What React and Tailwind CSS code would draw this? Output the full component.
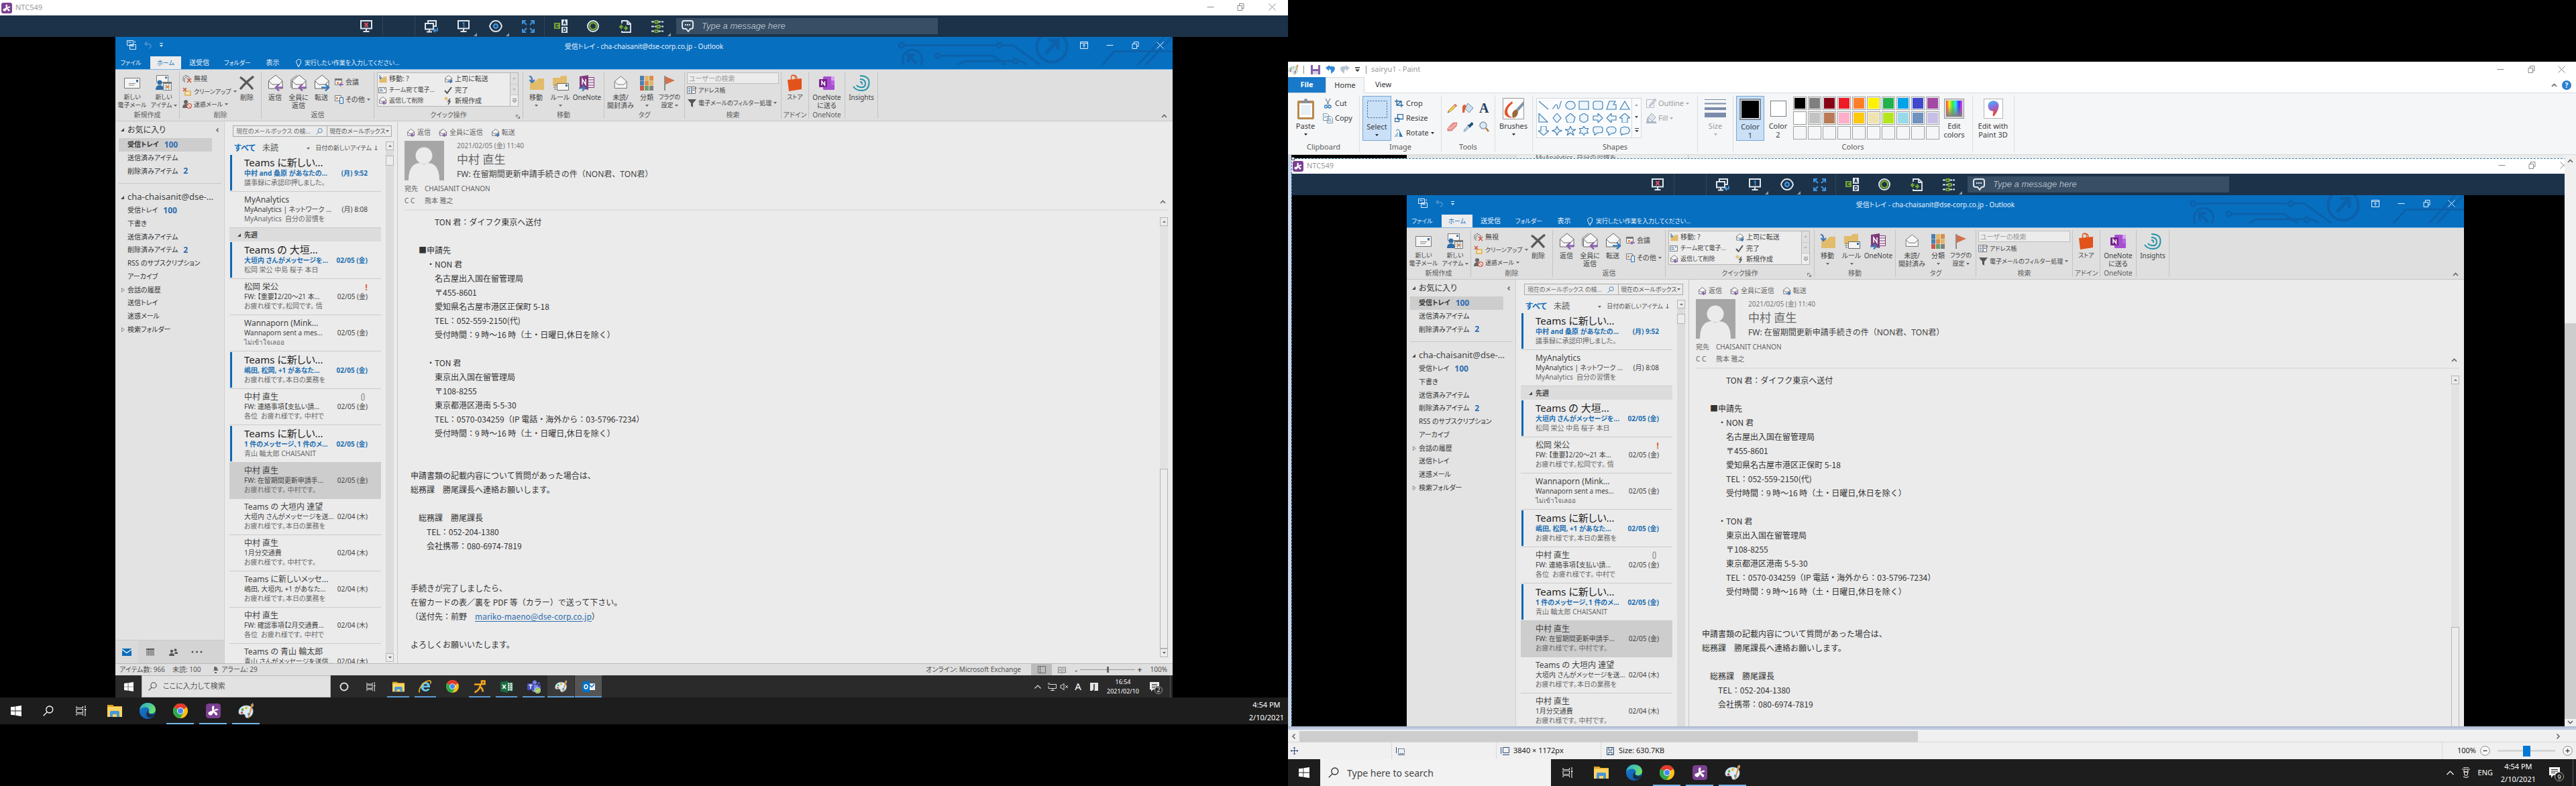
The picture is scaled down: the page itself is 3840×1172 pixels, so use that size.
import React from "react";

const cx = (...names) => names.filter(Boolean).join(" ");

function Svg({ w = 16, h = 16, box, className = "", children }) {
  return (
    <svg width={w} height={h} viewBox={box || `0 0 ${w} ${h}`} fill="none" aria-hidden="true" className={cx("shrink-0", className)}>
      {children}
    </svg>
  );
}

/* ---------- shared glyphs ---------- */

const Caret = ({ className = "text-[#666]" }) => (
  <Svg w={5} h={3} className={className}><path d="M0 0h5L2.500 3z" fill="currentColor" /></Svg>
);
const CaretUp = ({ className = "text-[#777]" }) => (
  <Svg w={5} h={3} className={className}><path d="M0 3h5L2.500 0z" fill="currentColor" /></Svg>
);
const Chevron = ({ className = "text-[#666]" }) => (
  <Svg w={9} h={6} className={className}><path d="M1 5l3.500-3.500L8 5" stroke="currentColor" strokeWidth="1.600" /></Svg>
);
const MinIcon = () => <Svg w={11} h={11}><path d="M.5 5.500h10" stroke="currentColor" /></Svg>;
const RestoreIcon = () => (
  <Svg w={11} h={11}><path d="M1 3.500h6.500V10.500H1zM3.500 3.500V.5H10v7H7.500" stroke="currentColor" /></Svg>
);
const CloseIcon = () => <Svg w={11} h={11}><path d="M.5.5l10 10M10.500.5l-10 10" stroke="currentColor" /></Svg>;

const Splash = ({ size = 16 }) => (
  <Svg w={size} h={size} box="0 0 16 16">
    <rect width="16" height="16" rx="3" fill="#7b3f90" />
    <path d="M7.500 2.500c1.500-.5 2 2 .9 4.800 1.600-1.700 4.400-2.300 4.900-1.100.4 1-2.300 1.600-4 1.700-.1.200 0 .5.200.7 2 .8 4 2.700 2.600 4-1.200 1-2.800-1-3.500-3-1 .5-1.500 3-3.500 3.200-1.500 0-2.900-1.300-2.600-2.600.4-1.900 3.300-1.400 4.400-3C6.400 6.300 6.100 3.200 7.500 2.500z" fill="#fff" />
  </Svg>
);
const WinLogo = ({ size = 16 }) => (
  <Svg w={size} h={size} box="0 0 16 16">
    <path d="M0 2.300L6.500 1.400v6.200H0zM7.300 1.300L16 0v7.600H7.300zM0 8.400h6.500v6.200L0 13.700zM7.300 8.400H16V16l-8.700-1.300z" fill="#fff" />
  </Svg>
);
const Glass = ({ size = 16, className = "text-white" }) => (
  <Svg w={size} h={size} box="0 0 16 16" className={className}>
    <circle cx="9.800" cy="6" r="5" stroke="currentColor" strokeWidth="1.300" />
    <path d="M6.300 9.600L.8 15.200" stroke="currentColor" strokeWidth="1.300" />
  </Svg>
);
const TaskView = ({ size = 16 }) => (
  <Svg w={size} h={size} box="0 0 16 16">
    <path d="M1 1v2.500h9.500V1M1 15v-2.500h9.500V15M1 5.500h9.500v5H1zM14 0v4M14 8v8" stroke="#ddd" strokeWidth="1.200" />
    <rect x="13" y="5" width="2.200" height="2.400" fill="#fff" />
  </Svg>
);
const Folder = ({ size = 22 }) => (
  <Svg w={size} h={size} box="0 0 22 22">
    <path d="M0 2h8l2 2h12v4H0z" fill="#e0a320" />
    <path d="M0 5h22v15H0z" fill="#fcd462" />
    <path d="M4 20v-7q0-2 2-2h10q2 0 2 2v7h-4v-4H8v4z" fill="#4a97d3" />
  </Svg>
);
const Edge = ({ size = 24 }) => (
  <Svg w={size} h={size} box="0 0 24 24">
    <defs>
      <linearGradient id="edgeTop" x1="0" y1="0" x2="1" y2=".6"><stop stopColor="#2aa7dc" /><stop offset="1" stopColor="#6be06a" /></linearGradient>
      <linearGradient id="edgeLow" x1="0" y1="0" x2="1" y2="1"><stop stopColor="#1b7fd4" /><stop offset="1" stopColor="#0d4f9f" /></linearGradient>
    </defs>
    <circle cx="12" cy="12" r="12" fill="url(#edgeLow)" />
    <path d="M0 11C.6 4.500 6 0 12 0c7 0 12 4.800 12 10 0 3.600-2.800 6-6.300 6-3 0-4.200-1.200-4.200-2 0-.6 1-1.200 1-3 0-2.500-2.700-4.500-6-4.500C4.500 6.500 1 8.500 0 11z" fill="url(#edgeTop)" />
    <path d="M13 13c.2 2.500 2.500 4.500 6 4.500 2 0 3.500-.7 4-1-.5 2-5 6-8.500 5.500C9.500 21 9 15 13 11z" fill="#1d1d1d" opacity=".75" />
  </Svg>
);
const Chrome = ({ size = 22 }) => (
  <Svg w={size} h={size} box="0 0 22 22">
    <circle cx="11" cy="11" r="11" fill="#fbc116" />
    <path d="M11 11L1.500 5.500A11 11 0 0 1 20.500 5.500z" fill="#e33b2e" />
    <path d="M11 11L1.500 5.500A11 11 0 0 0 10.500 22l5-8.500z" fill="#2da94f" />
    <path d="M1.500 5.500A11 11 0 0 1 20.500 6H11z" fill="#e33b2e" />
    <circle cx="11" cy="11" r="5" fill="#fff" /><circle cx="11" cy="11" r="4" fill="#4587f3" />
  </Svg>
);
const Palette = ({ size = 24 }) => (
  <Svg w={size} h={size} box="0 0 24 24">
    <path d="M1 15C0 9 5 4 12 4s11 4 10 10c-1 7-8 9-10 8-2-1-.5-4-3-5-3-1-7 2-8-2z" fill="#d9ecf8" stroke="#8fb9d6" strokeWidth=".7" />
    <circle cx="6.500" cy="10" r="2" fill="#5fae4b" /><circle cx="12" cy="7.500" r="2" fill="#edb52f" />
    <circle cx="5.500" cy="14.500" r="1.700" fill="#c8453c" /><circle cx="16" cy="17" r="2" fill="#3f83cc" />
    <path d="M20 3l2 1-6.500 19-1.500 0z" fill="#e08a2c" /><path d="M19 4.500C18 2 21 2 21 0c2 1 3 4 1 6z" fill="#c79b62" />
  </Svg>
);
const InternetExplorer = () => (
  <Svg w={20} h={20}>
    <path d="M16.500 13c-1 2.500-3.400 4-6 4-4 0-7-3-7-7s3-7 7-7 7 3 6.500 8H7.500c.3 4 4.500 4 5.500 2zM7.500 8.500h5.500c-.2-3.500-5.200-3.500-5.500 0z" fill="#66c6f1" />
    <path d="M1.500 18.500C-1 15 6 3 14 1.200c4-1 5 1 3.500 4.300" stroke="#f2bd2b" strokeWidth="1.600" />
  </Svg>
);
const Runner = () => (
  <Svg w={20} h={20}><path d="M2 6.500h11M13 1.500h4.500v4.500H13zM11.500 5.500C11 12 8 16 2.500 18.500M10.500 10c2 1 4 3.500 4.500 7.500" stroke="#f6a81c" strokeWidth="2.600" /></Svg>
);
const ExcelIcon = () => (
  <Svg w={19} h={18}>
    <path d="M9 3h9v12H9z" fill="#fff" stroke="#207346" /><path d="M10 6h7M10 9h7M10 12h7M14 3v12" stroke="#207346" />
    <path d="M0 2l11-2v18L0 16z" fill="#1d6b41" /><path d="M3 6l5 6M8 6l-5 6" stroke="#fff" strokeWidth="1.600" />
  </Svg>
);
const TeamsIcon = () => (
  <Svg w={20} h={20}>
    <circle cx="11" cy="3.500" r="3" fill="#7b83eb" /><circle cx="17" cy="5" r="2" fill="#5059c9" />
    <path d="M7 7h9v7q-1 4-5 4t-4-4z" fill="#7b83eb" /><path d="M15 8h5v5q-1 3-4 2z" fill="#5059c9" />
    <rect y="5" width="10" height="10" rx="1" fill="#4b53bc" /><path d="M2.500 7.500h5M5 7.500v5.500" stroke="#fff" strokeWidth="1.400" />
    <circle cx="15.500" cy="15.500" r="4.300" fill="#92c353" stroke="#fff" strokeWidth=".6" /><path d="M13.500 15.500l1.500 1.500 2.500-3" stroke="#fff" />
  </Svg>
);
const OutlookIcon = () => (
  <Svg w={19} h={18}>
    <path d="M9 4h10v10H9z" fill="#e9f2fb" /><path d="M10 6l4 3.500L18 5" stroke="#0f6cbd" strokeWidth="1.400" />
    <path d="M0 2l11-2v18L0 16z" fill="#0072c6" /><ellipse cx="5.500" cy="9" rx="2.300" ry="3" stroke="#fff" strokeWidth="1.600" />
  </Svg>
);

/* ---------- remote toolbar ---------- */

const MonitorIcon = ({ kind }) => (
  <Svg w={18} h={18}>
    <path d="M1 1h16v11.500H1zM9 13v3M4.500 17h9" stroke="#dfe6ec" strokeWidth="2" />
    {kind === "x" && <path d="M6.500 4l5 6M11.500 4l-5 6" stroke="#e0505c" strokeWidth="2" />}
    {kind === "1" && <path d="M7.500 5l2-1v6.500" stroke="#3f93dc" strokeWidth="1.600" />}
  </Svg>
);
const MonitorsIcon = () => (
  <Svg w={20} h={19}>
    <path d="M5 5V1h12v8h-3M1 5h12v8.500H1zM7 14v3M3 17.500h8" stroke="#dfe6ec" strokeWidth="2" />
    <path d="M19 11v4.500h-5M16 13l-2.500 2.500L16 18" stroke="#3f93dc" strokeWidth="1.800" />
  </Svg>
);
const EyeIcon = () => (
  <Svg w={20} h={18}><path d="M1 9q2.500-8 9-8t9 8q-2.500 8-9 8T1 9z" stroke="#dfe6ec" strokeWidth="2" /><circle cx="10" cy="9" r="3" stroke="#3f93dc" strokeWidth="2.400" /></Svg>
);
const ExpandIcon = () => (
  <Svg w={19} h={19}><path d="M6 1H1v5M1 1l6 6M13 1h5v5M18 1l-6 6M6 18H1v-5M1 18l6-6M13 18h5v-5M18 18l-6-6" stroke="#3f93dc" strokeWidth="2" /></Svg>
);
const CadIcon = () => (
  <Svg w={21} h={20}>
    <rect y="5" width="9" height="9" fill="#76a832" /><rect x="11" width="9" height="9" fill="#dfe6ec" /><rect x="11" y="11" width="9" height="9" fill="#dfe6ec" />
    <path d="M6.500 7.500h-3.500v4h3.500M13.500 7.500L15.500 2l2 5.500M14 5.500h3M14 13h1.500q2 0 2 2.500t-2 2.500H14z" stroke="#1c3249" strokeWidth="1.300" />
  </Svg>
);
const RingIcon = () => (
  <Svg w={18} h={18}><circle cx="9" cy="9" r="8" stroke="#dfe6ec" strokeWidth="2" /><circle cx="9" cy="9" r="5" stroke="#76a832" strokeWidth="2.400" /></Svg>
);
const FileIcon = () => (
  <Svg w={18} h={19}><path d="M4 5V1h8l5 4.500V18H4v-2M12 1v5h5" stroke="#dfe6ec" strokeWidth="1.800" /><path d="M4 7L1 10l3 3M1 10h5M9 9l3 3-3 3M12 12H7" stroke="#76a832" strokeWidth="2" /></Svg>
);
const SlidersIcon = () => (
  <Svg w={19} h={19}>
    <path d="M0 2.500h18M0 9.500h18M0 16.500h18" stroke="#dfe6ec" strokeWidth="2" strokeDasharray="4 1" />
    <path d="M5.500 1h4v3.500h-4zM8.500 8h4v3.500h-4zM5.500 14.800h4v3.500h-4z" fill="#1c3249" stroke="#76a832" strokeWidth="1.800" />
  </Svg>
);
const ChatIcon = () => (
  <Svg w={18} h={18}><path d="M4 1h10q3 0 3 3v6q0 3-3 3h-1l-3 4-3-4H4q-3 0-3-3V4q0-3 3-3z" stroke="#dfe6ec" strokeWidth="2" /><path d="M5 7h2M8 7h2M11 7h2" stroke="#dfe6ec" strokeWidth="2" /></Svg>
);

function ToolButton({ label, menu, children }) {
  return (
    <button aria-label={label} className="relative flex h-8 w-12 items-center justify-center">
      {children}
      {menu && <span className="absolute right-1 bottom-[1px]"><Svg w={5} h={5}><path d="M5 0v5H0z" fill="#8f9dab" /></Svg></span>}
    </button>
  );
}

function RemoteToolbar({ id }) {
  return (
    <div className="flex h-8 shrink-0 items-center justify-center bg-[#1c3249]">
      <ToolButton label="Disconnect"><MonitorIcon kind="x" /></ToolButton>
      <span className="h-8 w-[49px] border-x border-[#31465c]" />
      <ToolButton label="Switch monitor"><MonitorsIcon /></ToolButton>
      <ToolButton label="Monitor 1" menu><MonitorIcon kind="1" /></ToolButton>
      <ToolButton label="View options" menu><EyeIcon /></ToolButton>
      <ToolButton label="Full screen"><ExpandIcon /></ToolButton>
      <span className="h-8 w-px bg-[#31465c]" />
      <ToolButton label="Ctrl Alt Del"><CadIcon /></ToolButton>
      <ToolButton label="Record"><RingIcon /></ToolButton>
      <ToolButton label="File transfer"><FileIcon /></ToolButton>
      <ToolButton label="Settings" menu><SlidersIcon /></ToolButton>
      <label htmlFor={`${id}-msg`} className="ml-1 flex h-6 w-[390px] items-center gap-3 bg-[#374e65] pl-2">
        <ChatIcon />
        <input id={`${id}-msg`} aria-label="Message" placeholder="Type a message here" className="w-full bg-transparent font-['Liberation_Sans',sans-serif] text-[13px] text-white italic outline-none placeholder:text-[#aab6c2]" />
      </label>
    </div>
  );
}

/* ---------- Outlook icons ---------- */

const Env = ({ arrow, all, w = 25, h = 25 }) => (
  <Svg w={w} h={h} box="0 0 25 25">
    {all && <path d="M.8 20V8l9-7" stroke="#777" />}
    <path d="M2.500 9.500L13 1l10 8.500V21h-20.500z" fill="#f6f6f6" stroke="#666" strokeWidth={w < 16 ? 1.800 : 1} />
    <path d="M2.500 9.500L8 15h10l5-5.500" stroke="#666" strokeWidth={w < 16 ? 1.800 : 1} />
    {arrow === "left" && <path d="M24 19.500H14M18 14.500l-5 5 5 5" stroke="#8b5fb0" strokeWidth={w < 16 ? 3.600 : 2.400} />}
    {arrow === "right" && <path d="M12 19.500h10M18 14.500l5 5-5 5" stroke="#3a78b8" strokeWidth={w < 16 ? 3.600 : 2.400} />}
  </Svg>
);
const MailNew = () => (
  <Svg w={24} h={16}><path d="M.5.5h23v15H.5z" fill="#f5f5f5" stroke="#777" /><path d="M18 3h3v3.500h-3z" fill="#2e6da8" /><path d="M7 8.500h10M7 11h8" stroke="#888" /></Svg>
);
const ItemsNew = () => (
  <Svg w={24} h={24}>
    <path d="M1.500.5h17v10h-17z" fill="#f5f5f5" stroke="#777" /><path d="M14 2.500h3V5h-3z" fill="#2e6da8" />
    <circle cx="6" cy="11" r="3.500" fill="#2e6da8" /><path d="M0 22q0-7 6-7t6 7z" fill="#2e6da8" />
    <path d="M11.500 10.500h12v12h-12z" fill="#f5f5f5" stroke="#777" /><path d="M11 10h13v3H11z" fill="#777" /><path d="M15.500 13v9M19.500 13v9M12 16h12M12 19h12" stroke="#aaa" /><path d="M16 16h4v3h-4z" fill="#e88a43" />
  </Svg>
);
const BigX = () => <Svg w={24} h={22}><path d="M2 2q11 8 19 18M22 1Q12 8 2 20" stroke="#5a5a5a" strokeWidth="3.400" /></Svg>;
const FolderMove = ({ w = 25, h = 22 }) => (
  <Svg w={w} h={h} box="0 0 25 22"><path d="M3 8h9l3-4h9v17H3z" fill="#e2bb6b" /><path d="M2 0q5 2 4 9M2.500 6L6 10l4-4" stroke="#3f79b5" strokeWidth="2.200" /></Svg>
);
const RuleIcon = () => (
  <Svg w={25} h={24}><path d="M1 4h10l3-3h8v15H1z" fill="#e2bb6b" /><path d="M7.500 12.500h17v10h-17z" fill="#f5f5f5" stroke="#666" /><path d="M20 14h3v3h-3z" fill="#2e6da8" /><path d="M3 15h3M2 18h4M3 21h3" stroke="#666" /></Svg>
);
const OneNoteOld = () => (
  <Svg w={24} h={24}><path d="M13 3.500h9.500v15H13z" fill="#eee" stroke="#80397b" /><path d="M14 7h8M14 11h8M14 15h8" stroke="#80397b" /><path d="M1 2l13-2v22L1 19z" fill="#80397b" /><path d="M5 14V6l5 8V6" stroke="#fff" strokeWidth="1.500" /><path d="M0 19.500h8M5 15.500l4 4-4 4" stroke="#3f79b5" strokeWidth="2.200" /></Svg>
);
const OneNoteNew = () => (
  <Svg w={24} h={20}><rect x="6" width="17" height="20" rx="1.500" fill="#a74fd0" /><path d="M18 0h5v6h-5z" fill="#d9a2f0" /><path d="M18 6h5v7h-5z" fill="#ba66df" /><rect y="4" width="12" height="12" rx="1" fill="#75218b" /><path d="M4 13V7l4.500 6V7" stroke="#fff" strokeWidth="1.500" /></Svg>
);
const CategoryIcon = () => (
  <Svg w={20} h={22}>
    <path d="M0 0h6v7H0zM0 7.500h6v7H0z" fill="#4b7eb0" /><path d="M7 0h6v7H7zM14 7.500h6v7h-6z" fill="#e0b767" /><path d="M14 0h6v7h-6zM7 7.500h6v7H7z" fill="#da8c4c" /><path d="M0 15h6v7H0z" fill="#c75a4c" /><path d="M7 15h6v7H7z" fill="#6aa06a" /><path d="M14 15h6v7h-6z" fill="#808080" />
  </Svg>
);
const FlagIcon = () => <Svg w={18} h={22}><path d="M2 0v22" stroke="#777" strokeWidth="1.600" /><path d="M3 1l14 6-14 6z" fill="#d3714c" /></Svg>;
const StoreIcon = () => <Svg w={22} h={25}><path d="M5.500 8V4q0-3 3-3t3 3v4M8 2q6-2 6 5" stroke="#dd5a25" strokeWidth="1.400" /><path d="M0 8l21-2v16l-19 3z" fill="#e2521b" /></Svg>;
const InsightsIcon = () => <Svg w={26} h={24}><path d="M11 1q14 0 13.500 11T13 23Q5 23 1 17M11 6q8 0 8 6.500T12 18q-4 0-6-3M11 10q4 0 3 4" stroke="#2493a8" strokeWidth="2" /></Svg>;

const SmallEnv = ({ arrow = "left", all }) => <Env arrow={arrow} all={all} w={13} h={12} />;
const IgnoreIcon = () => <Svg w={14} h={13}><path d="M1 10V4l4-3 5 3v6M3 12V6l4-3" stroke="#777" /><path d="M7 6l6 6M13 6l-6 6" stroke="#d0573f" strokeWidth="1.600" /></Svg>;
const CleanIcon = () => <Svg w={14} h={13}><path d="M3 5h10v8H3z" fill="#e2bb6b" /><path d="M5 7h6v4H5z" fill="#f3e2bd" /><path d="M1 1l5 5M6 1L1 6" stroke="#d0573f" strokeWidth="1.600" /></Svg>;
const JunkIcon = () => <Svg w={14} h={13}><circle cx="5" cy="3" r="3" fill="#666" /><path d="M0 12q0-6 5-6t4 6z" fill="#666" /><circle cx="10" cy="9" r="3.400" fill="#eee" stroke="#d0573f" strokeWidth="1.300" /><path d="M8 7l4 4" stroke="#d0573f" /></Svg>;
const MeetIcon = () => <Svg w={13} h={12}><path d="M.5.5h10v9H.5z" fill="#f2f2f2" stroke="#777" /><path d="M0 0h11v3H0z" fill="#777" /><path d="M3 5h3v3H3z" fill="#e88a43" /><path d="M13 9H7M9.500 6.500L7 9l2.500 2.500" stroke="#8b5fb0" strokeWidth="1.400" /></Svg>;
const MoreIcon = () => <Svg w={13} h={13}><path d="M.5.5h9v8h-9z" fill="#f2f2f2" stroke="#777" /><path d="M2 3h3v3H2z" fill="#e88a43" /><path d="M7.500 3.500h5v9h-5z" fill="#dcebf7" stroke="#2e6da8" /></Svg>;
const CardIcon = () => <Svg w={12} h={9}><path d="M.5.5h11v8H.5z" fill="#f2f2f2" stroke="#777" /><path d="M2 3h4M2 5.500h5M8 2.500h2" stroke="#2e6da8" /></Svg>;
const CheckIcon = () => <Svg w={12} h={11}><path d="M1 6l3.500 4L11 1" stroke="#555" strokeWidth="2" /></Svg>;
const BoltIcon = () => <Svg w={12} h={12}><path d="M9 3L6 7h3l-3 5" stroke="#555" strokeWidth="1.600" /><path d="M3 0v6M0 3h6M1 1l4 4M5 1L1 5" stroke="#e5b667" /></Svg>;
const BookIcon = () => <Svg w={14} h={11}><path d="M.5.5H7v10H.5zM7 .5h5.500v10H7z" fill="#f2f2f2" stroke="#777" /><path d="M2 3h3M2 5.500h3M2 8h3M8.500 3h3M8.500 5.500h3" stroke="#2e6da8" /><path d="M13.500 1v3" stroke="#d0573f" /></Svg>;
const FunnelIcon = () => <Svg w={13} h={12}><path d="M0 0h13L8 6v6l-3-2V6z" fill="#555" /></Svg>;

/* ---------- Outlook ribbon ---------- */

function Big({ icon, lines, w, caret, text }) {
  return (
    <button className={cx("flex shrink-0 flex-col items-center", w, text)}>
      <span className="flex h-[31px] items-center justify-center">{icon}</span>
      {lines.map((line, i) => (
        <span key={line} className="flex h-3 items-center gap-[2px] leading-3 whitespace-nowrap">
          {line}
          {caret === "inline" && i === lines.length - 1 && <Caret />}
        </span>
      ))}
      {caret === "below" && <span className="flex h-3 items-center"><Caret /></span>}
    </button>
  );
}
const Small = ({ icon, children, caret, h = "h-[19px]", text }) => (
  <button className={cx("flex items-center gap-[3px] whitespace-nowrap", h, text)}>
    <span className="flex w-[14px] justify-center">{icon}</span>
    {children}
    {caret && <Caret />}
  </button>
);
function Group({ w, label, children, launcher }) {
  return (
    <section className={cx("flex shrink-0 flex-col", w)}>
      <div className="flex h-full border-r border-[#c3c3c3]">
        <div className="flex min-w-0 flex-1 flex-col">
          <div className="flex flex-1 pt-[1px]">{children}</div>
          <div className="relative h-[12px] text-center leading-[12px] text-[#5f5f5f]">
            {label}
            {launcher && <span className="absolute right-1 bottom-0"><Svg w={6} h={6}><path d="M.5 4V.5H4M2 2l3 3M5.500 2.500v3h-3" stroke="#777" /></Svg></span>}
          </div>
        </div>
      </div>
    </section>
  );
}

function Ribbon({ id }) {
  return (
    <div className="flex h-[77px] shrink-0 border-b border-[#c6c6c6] bg-[#dfdfdf] py-[3px] text-[10px] text-[#444]">
      <Group w="w-[96px]" label="新規作成">
        <Big w="w-[50px]" text="text-[9px]" icon={<MailNew />} lines={["新しい", "電子メール"]} />
        <Big w="w-[44px]" text="text-[9px]" icon={<ItemsNew />} lines={["新しい", "アイテム"]} caret="inline" />
      </Group>
      <Group w="w-[122px]" label="削除">
        <div className="flex w-[80px] flex-col pl-[4px]">
          <Small icon={<IgnoreIcon />}>無視</Small>
          <Small text="text-[9px]" icon={<CleanIcon />} caret>クリーンアップ</Small>
          <Small text="text-[9px]" icon={<JunkIcon />} caret>迷惑メール</Small>
        </div>
        <Big w="w-[40px]" icon={<BigX />} lines={["削除"]} />
      </Group>
      <Group w="w-[168px]" label="返信">
        <Big w="w-[40px]" icon={<Env arrow="left" />} lines={["返信"]} />
        <Big w="w-[30px]" icon={<Env arrow="left" all />} lines={["全員に", "返信"]} />
        <Big w="w-[38px]" icon={<Env arrow="right" />} lines={["転送"]} />
        <div className="flex flex-col">
          <Small h="h-[29px]" icon={<MeetIcon />}>会議</Small>
          <Small h="h-[23px]" icon={<MoreIcon />} caret>その他</Small>
        </div>
      </Group>
      <Group w="w-[222px]" label="クイック操作" launcher>
        <div className="mx-1 flex h-[51px] w-[211px] border border-[#b5b5b5] bg-[#ececec]">
          <div className="w-[98px]">
            <Small h="h-[17px]" icon={<FolderMove w={13} h={12} />}>移動: ?</Small>
            <Small h="h-[16px]" text="text-[9px]" icon={<CardIcon />}>チーム宛て電子…</Small>
            <Small h="h-[16px]" text="text-[9px]" icon={<SmallEnv />}>返信して削除</Small>
          </div>
          <div className="flex-1">
            <Small h="h-[17px]" icon={<SmallEnv arrow="right" />}>上司に転送</Small>
            <Small h="h-[16px]" icon={<CheckIcon />}>完了</Small>
            <Small h="h-[16px]" icon={<BoltIcon />}>新規作成</Small>
          </div>
          <div className="flex w-[12px] flex-col border-l border-[#b5b5b5] bg-[#dfdfdf]">
            <button aria-label="上へ" className="flex flex-1 items-center justify-center border-b border-[#c8c8c8]"><CaretUp className="text-[#b5b5b5]" /></button>
            <button aria-label="下へ" className="flex flex-1 items-center justify-center border-b border-[#c8c8c8]"><Caret className="text-[#b5b5b5]" /></button>
            <button aria-label="その他" className="flex flex-1 items-center justify-center bg-[#eee]"><Svg w={6} h={6}><path d="M0 .5h6M0 3h6L3 6z" stroke="#666" strokeWidth=".8" /></Svg></button>
          </div>
        </div>
      </Group>
      <Group w="w-[121px]" label="移動">
        <Big w="w-[38px]" icon={<FolderMove />} lines={["移動"]} caret="below" />
        <Big w="w-[34px]" icon={<RuleIcon />} lines={["ルール"]} caret="below" />
        <Big w="w-[46px]" icon={<OneNoteOld />} lines={["OneNote"]} />
      </Group>
      <Group w="w-[120px]" label="タグ">
        <Big w="w-[48px]" icon={<Env w={22} h={22} />} lines={["未読/", "開封済み"]} />
        <Big w="w-[30px]" icon={<CategoryIcon />} lines={["分類"]} caret="below" />
        <Big w="w-[38px]" text="text-[9px]" icon={<FlagIcon />} lines={["フラグの", "設定"]} caret="inline" />
      </Group>
      <Group w="w-[144px]" label="検索">
        <div className="flex flex-col pl-[3px]">
          <input id={`${id}-people`} aria-label="ユーザーの検索" placeholder="ユーザーの検索" className="h-[17px] w-[137px] border border-[#bdbdbd] bg-[#ececec] px-[2px] outline-none placeholder:text-[#9a9a9a]" />
          <Small text="text-[9px]" icon={<BookIcon />}>アドレス帳</Small>
          <Small text="text-[9px]" icon={<FunnelIcon />} caret>電子メールのフィルター処理</Small>
        </div>
      </Group>
      <Group w="w-[41px]" label="アドイン"><Big w="w-[40px]" icon={<StoreIcon />} lines={["ストア"]} text="text-[9px]" /></Group>
      <Group w="w-[54px]" label="OneNote"><Big w="w-[53px]" icon={<OneNoteNew />} lines={["OneNote", "に送る"]} /></Group>
      <Group w="w-[49px]" label=""><Big w="w-[48px]" icon={<InsightsIcon />} lines={["Insights"]} /></Group>
      <button aria-label="リボンを折りたたむ" className="mr-2 mb-[1px] ml-auto self-end"><Chevron /></button>
    </div>
  );
}

function OutlookHeader() {
  return (
    <div className="relative h-[49px] shrink-0 overflow-hidden border-b border-[#7fb6e3] bg-[#076fc0] text-[10px] text-[#e6f0f9]">
      <span className="absolute top-0 right-0">
        <Svg w={412} h={42}>
          <g stroke="#0c61aa" strokeWidth="3">
            <circle cx="8" cy="12.500" r="3.500" /><path d="M12 12.500h138M158 12.500h16L215 42" /><circle cx="154" cy="12.500" r="3.500" />
            <circle cx="61.500" cy="28" r="3.500" /><path d="M65 28h79l20 14" />
            <path d="M92 42q8-6 14-6h68M181 36q8 0 14 6" /><circle cx="177.500" cy="36.500" r="3.500" />
            <circle cx="24" cy="34" r="14.500" /><path d="M30 40L20 29M18 38V27h10" strokeWidth="4" />
            <circle cx="232" cy="15" r="22.500" strokeWidth="4" /><path d="M223 25l16-18M227 5h14v14" strokeWidth="5" />
            <path d="M307 42l18-20.500h87M360 42L399 0M372 42L411 0" />
          </g>
        </Svg>
      </span>
      <div className="relative flex h-[29px] items-center">
        <div className="flex w-[151px] items-center gap-3 pb-[5px] pl-[17px]">
          <button aria-label="すべて送受信"><Svg w={14} h={14}><path d="M.5.5h9v7h-9zM4.500 6.500h9v7h-9zM2 3h5M12 1v3M6 9h5" stroke="currentColor" /></Svg></button>
          <button aria-label="元に戻す" className="text-[#4e93cf]"><Svg w={11} h={11}><path d="M4 0L1 3.500 4.500 6M1 3.500h5q4 0 4 3T7 10" stroke="currentColor" strokeWidth="1.400" /></Svg></button>
          <button aria-label="カスタマイズ"><Svg w={5} h={6}><path d="M0 0h5v1H0zM0 3h5L2.500 6z" fill="currentColor" /></Svg></button>
        </div>
        <h1 className="flex-1 text-center">受信トレイ - cha-chaisanit@dse-corp.co.jp - Outlook</h1>
        <div className="flex pb-[5px]">
          <button aria-label="リボンの表示オプション" className="flex w-[38px] justify-center"><Svg w={12} h={11}><path d="M.5.5h11v10H.5zM.5 2.500h11M6 9V4M4 6l2-2 2 2" stroke="currentColor" /></Svg></button>
          <button aria-label="最小化" className="flex w-[38px] justify-center"><MinIcon /></button>
          <button aria-label="元のサイズに戻す" className="flex w-[38px] justify-center"><RestoreIcon /></button>
          <button aria-label="閉じる" className="flex w-[37px] justify-center"><CloseIcon /></button>
        </div>
      </div>
      <nav className="relative flex h-[19px]">
        <button className="w-[52px] pr-[6px] text-[9px]">ファイル</button>
        <button className="w-[46px] bg-[#ececec] text-[9px] text-[#076fc0]">ホーム</button>
        <button className="w-[54px]">送受信</button>
        <button className="w-[60px] text-[9px]">フォルダー</button>
        <button className="w-[45px]">表示</button>
        <button className="flex items-center gap-[5px] pl-3 text-[9px]">
          <Svg w={8} h={12}><path d="M2.500 8Q.5 6 .5 4t3.500-3.500T7.500 4t-2 4v2h-3zM3 11.500h2" stroke="currentColor" /></Svg>
          実行したい作業を入力してください...
        </button>
      </nav>
    </div>
  );
}

/* ---------- Outlook body ---------- */

const favourites = [["受信トレイ", "100", true], ["送信済みアイテム"], ["削除済みアイテム", "2"]];
const folders = [
  ["受信トレイ", "100"], ["下書き"], ["送信済みアイテム"], ["削除済みアイテム", "2"], ["RSS のサブスクリプション"],
  ["アーカイブ"], ["会話の履歴", null, false, true], ["送信トレイ"], ["迷惑メール"], ["検索フォルダー", null, false, true],
];
const Tri = () => <Svg w={5} h={5}><path d="M5 0v5H0z" fill="#444" /></Svg>;

function FolderRow({ item: [name, count, active, child] }) {
  return (
    <button className={cx("mr-[18px] ml-[5px] flex flex-1 items-center gap-2 text-left text-[10px]", active && "bg-[#cdcdcd] font-semibold")}>
      <span className="-mr-2 w-[13px] pl-[4px]">{child && <Svg w={5} h={7}><path d="M.5.5v6l4-3z" stroke="#777" strokeWidth=".8" /></Svg>}</span>
      <span className="text-[#333]">{name}</span>
      {count && <span className="text-[12px] leading-[14px] font-bold text-[#2b6cb0]">{count}</span>}
    </button>
  );
}

function FolderPane() {
  return (
    <aside className="flex w-[163px] shrink-0 flex-col border-r border-[#cfcfcf] bg-[#e3e3e3]">
      <div className="flex h-[25px] items-center justify-between pr-2 pl-[8px] text-[12px] text-[#333]">
        <button className="flex items-center gap-[5px]"><Tri />お気に入り</button>
        <button aria-label="折りたたむ"><Svg w={4} h={6}><path d="M3.500.5l-2.500 2.500 2.500 2.500" stroke="#555" strokeWidth="1.400" /></Svg></button>
      </div>
      <div className="flex h-[59px] flex-col">{favourites.map((f) => <FolderRow key={f[0]} item={f} />)}</div>
      <div className="mx-[5px] mt-2 mr-1 border-t border-[#c8c8c8]" />
      <button className="mt-[10px] flex h-5 items-center gap-[5px] pl-[8px] text-[13px] text-[#444]"><Tri />cha-chaisanit@dse-…</button>
      <div className="flex h-[197px] flex-col">{folders.map((f) => <FolderRow key={f[0]} item={f} />)}</div>
      <nav className="mt-auto flex h-[35px] items-center border-t border-[#cbcbcb] bg-[#d4d4d4] text-[#555]">
        <button aria-label="メール" className="flex h-full w-[34px] items-center justify-center bg-[#dadada]"><Svg w={14} h={11}><path d="M0 0h14v11H0z" fill="#0e6cbb" /><path d="M0 1.500l7 5 7-5" stroke="#fff" strokeWidth="1.200" /></Svg></button>
        <button aria-label="予定表" className="flex w-[35px] justify-center"><Svg w={12} h={11}><path d="M0 0h12v2H0z" fill="#555" /><path d="M0 4h12M0 6.500h12M0 9h12M1 2v9M3.500 2v9M6 2v9M8.500 2v9M11 2v9" stroke="#777" strokeWidth="1" /></Svg></button>
        <button aria-label="連絡先" className="flex w-[35px] justify-center"><Svg w={13} h={11}><circle cx="4" cy="4" r="2.200" fill="#555" /><path d="M0 11q0-4 4-4t4 4zM8 8q0-3 3-3t2 3z" fill="#555" /><circle cx="9.500" cy="2.200" r="2" fill="#555" /></Svg></button>
        <button aria-label="その他" className="flex w-[35px] justify-center"><Svg w={17} h={4}><circle cx="2" cy="2" r="1.500" fill="#555" /><circle cx="8.500" cy="2" r="1.500" fill="#555" /><circle cx="15" cy="2" r="1.500" fill="#555" /></Svg></button>
      </nav>
    </aside>
  );
}

const recent = [
  { from: "Teams に新しい...", subject: "中村 and 桑原 があなたの...", date: "(月) 9:52", text: "議事録に承認印押しました。", unread: true },
  { from: "MyAnalytics", subject: "MyAnalytics | ネットワーク ...", date: "(月) 8:08", text: "MyAnalytics  自分の習慣を" },
];
const lastWeek = [
  { from: "Teams の 大垣...", subject: "大垣内 さんがメッセージを...", date: "02/05 (金)", text: "松岡 栄公 中島 桜子 本日", unread: true },
  { from: "松岡 栄公", subject: "FW: 【重要】2/20～21 本...", date: "02/05 (金)", text: "お疲れ様です。松岡です。 情", mark: "!" },
  { from: "Wannaporn (Mink...", subject: "Wannaporn sent a mes...", date: "02/05 (金)", text: "ไม่เข้าใจเลออ" },
  { from: "Teams に新しい...", subject: "嶋田, 松岡, +1 があなた...", date: "02/05 (金)", text: "お疲れ様です。本日の業務を", unread: true },
  { from: "中村 直生", subject: "FW: 連絡事項【支払い請...", date: "02/05 (金)", text: "各位  お疲れ様です。 中村で", mark: "clip" },
  { from: "Teams に新しい...", subject: "1 件のメッセージ、1 件のメ...", date: "02/05 (金)", text: "青山 輪太郎 CHAISANIT", unread: true },
  { from: "中村 直生", subject: "FW: 在留期間更新申請手...", date: "02/05 (金)", text: "お疲れ様です。 中村です。", selected: true },
  { from: "Teams の 大垣内 達望", subject: "大垣内 さんがメッセージを送...", date: "02/04 (木)", text: "お疲れ様です。本日の業務を" },
  { from: "中村 直生", subject: "1月分交通費", date: "02/04 (木)", text: "お疲れ様です。 中村です。" },
  { from: "Teams に新しいメッセ...", subject: "嶋田, 大垣内, +1 があなた...", date: "02/04 (木)", text: "お疲れ様です。本日の業務を" },
  { from: "中村 直生", subject: "FW: 確認事項【2月交通費...", date: "02/04 (木)", text: "各位  お疲れ様です。 中村で" },
  { from: "Teams の 青山 輪太郎", subject: "青山 さんがメッセージを送信...", date: "02/04 (木)", text: "お疲れ様です。" },
];

function MailItem({ m }) {
  return (
    <button className={cx("flex shrink-0 border-b border-[#cbcbcb] pr-5 pl-[1px] text-left text-[10px] whitespace-pre", m.unread ? "h-[56px]" : "h-[54px]", m.selected && "bg-[#cdcdcd]")}>
      <span className={cx("mt-[1px] mr-[18px] h-[53px] w-[3px] shrink-0", m.unread && "bg-[#0f67b1]")} />
      <span className={cx("flex min-w-0 flex-1 flex-col", m.unread ? "pt-[4px]" : "pt-[5px]")}>
        <span className="flex items-center justify-between">
          <span className={cx(m.unread ? "h-[17px] text-[15px] leading-[17px] text-[#222]" : "h-[14px] text-[12px] leading-[14px] text-[#444]")}>{m.from}</span>
          {m.mark === "!" && <span className="text-[13px] leading-[14px] font-bold text-[#d9623b]">!</span>}
          {m.mark === "clip" && <Svg w={6} h={12} className="mr-1"><path d="M1 3v6q0 2 2 2t2-2V3Q5 .8 3.200.8T1.500 3" stroke="#777" /></Svg>}
        </span>
        <span className={cx("flex h-[14px] justify-between gap-1 leading-[14px]", m.unread ? "font-bold text-[#1f6fb2]" : "text-[#444]")}>
          <span>{m.subject}</span>
          <span>{m.date}</span>
        </span>
        <span className="h-[14px] leading-[14px] text-[#6a6a6a]">{m.text}</span>
      </span>
    </button>
  );
}

const ScrollBtn = ({ label, down }) => (
  <button aria-label={label} className="flex h-[13px] shrink-0 items-center justify-center border border-[#b5b5b5] bg-[#ececec]">{down ? <Caret /> : <CaretUp />}</button>
);

function MailList({ id }) {
  return (
    <section className="flex w-[258px] shrink-0 flex-col border-r border-[#c6c6c6] bg-[#ebebeb] text-[10px] text-[#555]">
      <div className="mt-[6px] ml-3 flex h-[17px] w-[237px] shrink-0 border border-[#a9a9a9] text-[9px]">
        <label className="flex w-[140px] items-center border-r border-[#a9a9a9] pr-[6px] pl-1" htmlFor={`${id}-search`}>
          <input id={`${id}-search`} aria-label="検索" placeholder="現在のメールボックス の検…" className="h-full min-w-0 flex-1 bg-transparent outline-none placeholder:text-[#6a6a6a]" />
          <Glass size={10} className="text-[#2e6da8]" />
        </label>
        <button className="flex flex-1 items-center justify-between pr-1 pl-[3px] whitespace-nowrap">現在のメールボックス<Caret /></button>
      </div>
      <div className="mt-1 flex min-h-0 flex-1">
        <div className="ml-[7px] flex w-[226px] flex-col overflow-hidden">
          <div className="flex h-[22px] shrink-0 items-center pt-1 pl-[7px]">
            <button className="w-[42px] text-left text-[12px] leading-[16px] font-bold text-[#0f6cbd]">すべて</button>
            <button className="w-[66px] text-left text-[12px] leading-[16px]">未読</button>
            <Caret />
            <button className="ml-auto flex items-center gap-1 pr-[5px] text-[9px] whitespace-nowrap">日付の新しいアイテム<Svg w={5} h={8}><path d="M2.500 0v7M.5 5l2 2 2-2" stroke="#555" strokeWidth=".9" /></Svg></button>
          </div>
          {recent.map((m) => <MailItem key={m.date} m={m} />)}
          <button className="flex h-5 shrink-0 items-center gap-[5px] bg-[#dcdcdc] pl-3 font-bold text-[#444]"><Tri />先週</button>
          {lastWeek.map((m, i) => <MailItem key={i} m={m} />)}
        </div>
        <div className="mt-[3px] mb-[2px] ml-[7px] flex w-3 flex-col bg-[#dcdcdc]">
          <ScrollBtn label="上へスクロール" />
          <div className="mt-[8px] h-[15px] border border-[#b5b5b5] bg-[#ececec]" />
          <div className="flex-1" />
          <ScrollBtn label="下へスクロール" down />
        </div>
      </div>
    </section>
  );
}

const bodyLines = [
  "　　　TON 君：ダイフク東京へ送付", "", "　■申請先", "　　・NON 君", "　　　名古屋出入国在留管理局", "　　　〒455-8601",
  "　　　愛知県名古屋市港区正保町 5-18", "　　　TEL：052-559-2150(代)", "　　　受付時間：9 時～16 時（土・日曜日,休日を除く）", "",
  "　　・TON 君", "　　　東京出入国在留管理局", "　　　〒108-8255", "　　　東京都港区港南 5-5-30",
  "　　　TEL：0570-034259（IP 電話・海外から：03-5796-7234）", "　　　受付時間：9 時～16 時（土・日曜日,休日を除く）", "", "",
  "申請書類の記載内容について質問があった場合は、", "総務課　勝尾課長へ連絡お願いします。", "", "　総務課　勝尾課長",
  "　　TEL：052-204-1380", "　　会社携帯：080-6974-7819", "", "", "手続きが完了しましたら、",
  "在留カードの表／裏を PDF 等（カラー）で送って下さい。", "mail", "", "よろしくお願いいたします。",
];

function ReadingPane() {
  return (
    <article className="flex min-w-0 flex-1 flex-col bg-[#ebebeb] pl-[10px] text-[#444]">
      <div className="mt-[9px] flex h-[15px] shrink-0 items-center gap-[12px] pl-[3px] text-[10px] text-[#666]">
        <button className="flex items-center gap-[3px]"><SmallEnv />返信</button>
        <button className="flex items-center gap-[3px]"><SmallEnv all />全員に返信</button>
        <button className="flex items-center gap-[3px]"><SmallEnv arrow="right" />転送</button>
      </div>
      <header className="mt-[5px] mr-[7px] flex h-[104px] shrink-0 flex-col border-b-2 border-[#dfdfdf] text-[10px]">
        <div className="flex gap-[19px]">
          <Svg w={59} h={59}><path d="M0 0h59v59H0z" fill="#a6a6a6" /><circle cx="29" cy="22" r="12.500" fill="#ebebeb" /><path d="M6 59Q6 33 24 33q5 4 10 0 18 0 18 26z" fill="#ebebeb" /></Svg>
          <div className="flex flex-col">
            <time className="h-[14px] leading-[14px] text-[#777]">2021/02/05 (金) 11:40</time>
            <h2 className="h-[28px] text-[17px] leading-[28px] text-[#666]">中村 直生</h2>
            <p className="h-[16px] text-[12px] leading-[16px] [font-feature-settings:normal]">FW: 在留期間更新申請手続きの件（NON君、TON君）</p>
          </div>
        </div>
        <div className="mt-[3px] flex items-end justify-between text-[#666]">
          <dl className="grid grid-cols-[30px_auto] leading-[18px]">
            <dt>宛先</dt><dd>CHAISANIT CHANON</dd>
            <dt>C C</dt><dd>熊本 雅之</dd>
          </dl>
          <button aria-label="折りたたむ" className="mr-[3px] mb-[4px]"><Chevron /></button>
        </div>
      </header>
      <div className="flex min-h-0 flex-1 overflow-hidden pt-[6px]">
        <div className="min-w-0 flex-1 pl-[9px] font-['Noto_Sans_CJK_JP',sans-serif] text-[12px] leading-[21px] text-[#333] [font-feature-settings:normal]">
          {bodyLines.map((line, i) => line === "mail" ? (
            <p key={i} className="h-[21px] whitespace-pre">（送付先：前野　<a href="mailto:mariko-maeno@dse-corp.co.jp" className="text-[#2b6cb0] underline underline-offset-2">mariko-maeno@dse-corp.co.jp</a>）</p>
          ) : <p key={i} className="h-[21px] whitespace-pre">{line}</p>)}
        </div>
        <div className="mt-1 mr-[7px] mb-[9px] flex w-3 flex-col bg-[#e2e2e2]">
          <ScrollBtn label="上へスクロール" />
          <div className="h-[362px] shrink" />
          <div className="min-h-0 flex-1 border border-[#b5b5b5] bg-[#ececec]" />
          <ScrollBtn label="下へスクロール" down />
        </div>
      </div>
    </article>
  );
}

function StatusBar({ id }) {
  return (
    <footer className="flex h-[18px] shrink-0 items-center border-t border-[#b9b9b9] bg-[#dfdfdf] pr-2 pl-[6px] text-[10px] text-[#555]">
      <span className="w-[79px]">アイテム数: 966</span>
      <span className="w-[60px]">未読: 100</span>
      <span className="flex items-center gap-1"><Svg w={9} h={10}><path d="M0 6h9q-2-1-2-3T4.500 0 2 3 0 6zM3 8h3v2H3z" fill="#666" /></Svg>アラーム: 29</span>
      <span className="ml-auto pr-[15px]">オンライン: Microsoft Exchange</span>
      <button aria-label="標準表示" className="flex h-full w-[31px] items-center justify-center bg-[#bcbcbc]"><Svg w={12} h={11}><path d="M.5.5h11v10H.5zM3.500.5v10" stroke="#666" /></Svg></button>
      <button aria-label="閲覧ビュー" className="flex w-[30px] justify-center"><Svg w={12} h={10}><path d="M.5 1Q3 0 6 2q3-2 5.500-1v8Q9 8 6 10 3 8 .5 9zM6 2v8M2 4h2M2 6h2M8 4h2M8 6h2" stroke="#777" /></Svg></button>
      <button aria-label="縮小" className="w-3 leading-none font-bold">-</button>
      <label className="relative flex h-full w-[82px] items-center" htmlFor={`${id}-zoom`}>
        <input id={`${id}-zoom`} aria-label="ズーム" type="range" defaultValue="50" className="h-[9px] w-full appearance-none bg-[linear-gradient(#999,#999)] bg-[length:100%_1px] bg-center bg-no-repeat [&::-webkit-slider-thumb]:h-[9px] [&::-webkit-slider-thumb]:w-[3px] [&::-webkit-slider-thumb]:appearance-none [&::-webkit-slider-thumb]:bg-[#666]" />
      </label>
      <button aria-label="拡大" className="w-[14px] text-[12px] leading-none font-bold">+</button>
      <span className="w-[34px] text-right">100%</span>
    </footer>
  );
}

function TaskIcon({ label, w = "w-10", on, line = "bg-[#76b9ed]", bg, inset = "inset-x-1", children }) {
  return (
    <button aria-label={label} className={cx("relative flex h-full items-center justify-center", w, bg)}>
      {children}
      {on && <span className={cx("absolute bottom-0 h-[2px]", inset, line)} />}
    </button>
  );
}

function RemoteTaskbar({ id }) {
  const line = "bg-[#5d9bd3]";
  return (
    <div className="flex h-[33px] shrink-0 items-center bg-[#2a2a2a] text-white">
      <TaskIcon label="スタート" w="w-[39px]"><WinLogo size={14} /></TaskIcon>
      <label htmlFor={`${id}-task`} className="flex h-full w-[282px] items-center gap-[9px] border border-[#b9b9b9] bg-[#e2e2e2] pl-[9px]">
        <Glass size={13} className="text-[#444]" />
        <input id={`${id}-task`} aria-label="検索" placeholder="ここに入力して検索" className="min-w-0 flex-1 bg-transparent text-[11px] text-[#333] outline-none placeholder:text-[#555]" />
      </label>
      <TaskIcon label="Cortana"><Svg w={14} h={14}><circle cx="7" cy="7" r="5.500" stroke="#ddd" strokeWidth="2" /></Svg></TaskIcon>
      <TaskIcon label="タスク ビュー"><TaskView size={14} /></TaskIcon>
      <TaskIcon label="エクスプローラー" w="w-[41px]" on line={line}><Folder size={18} /></TaskIcon>
      <TaskIcon label="Internet Explorer" on line={line}><InternetExplorer /></TaskIcon>
      <TaskIcon label="Chrome" w="w-[41px]"><Chrome size={19} /></TaskIcon>
      <TaskIcon label="Runner" on line={line}><Runner /></TaskIcon>
      <TaskIcon label="Excel" on line={line}><ExcelIcon /></TaskIcon>
      <TaskIcon label="Teams" w="w-[41px]" on line={line}><TeamsIcon /></TaskIcon>
      <TaskIcon label="ペイント" on line={line} inset="inset-x-0" bg="bg-[#3a3a3a]"><Palette size={19} /></TaskIcon>
      <TaskIcon label="Outlook" on line={line} inset="inset-x-0" bg="ml-px bg-[#555]"><OutlookIcon /></TaskIcon>
      <div className="ml-auto flex h-full items-center">
        <button aria-label="隠れているインジケーター" className="mr-[9px]"><Svg w={10} h={6}><path d="M.5 5.500L5 1l4.500 4.500" stroke="#ddd" strokeWidth="1.200" /></Svg></button>
        <Svg w={14} h={13}><path d="M4 3.500h9.500v6H2V6M8 10v2M5 12.500h6M1 1l3 3M4 1L1 4" stroke="#ddd" /></Svg>
        <Svg w={13} h={12} className="ml-[5px]"><path d="M1 4h2l3-3v10L3 8H1zM8 4l4 4M12 4L8 8" stroke="#ddd" /></Svg>
        <span className="w-7 text-center text-[15px]">A</span>
        <span className="ml-1 flex h-3 w-3 items-center justify-center bg-[#e5e5e5] text-[10px] leading-none font-bold text-[#222]">J</span>
        <time className="flex w-[74px] flex-col text-center text-[9px] leading-[14px]"><span>16:54</span><span>2021/02/10</span></time>
        <button aria-label="通知" className="relative mr-[16px] ml-[3px]">
          <Svg w={14} h={14}><path d="M0 0h14v11H5l-3 3v-3H0z" fill="#eee" /><path d="M3 3.500h8M3 6h8M3 8.500h5" stroke="#333" /></Svg>
          <span className="absolute top-[6px] left-[7px] flex h-3 w-3 items-center justify-center rounded-full border border-[#999] bg-[#2a2a2a] text-[8px] leading-none">2</span>
        </button>
        <span className="mr-[3px] h-full w-px bg-[#555]" />
      </div>
    </div>
  );
}

function RemoteSession({ id }) {
  return (
    <div className="flex min-h-0 flex-1 flex-col bg-black">
      <div className="flex h-[23px] shrink-0 items-center bg-white pl-[2px] text-[11px] text-[#999]">
        <Splash size={16} />
        <span className="pl-[5px]">NTC549</span>
        <div className="ml-auto flex pb-[2px] text-[#888]">
          <button aria-label="Minimize" className="flex w-[46px] justify-center"><MinIcon /></button>
          <button aria-label="Restore" className="flex w-[45px] justify-center"><RestoreIcon /></button>
          <button aria-label="Close" className="flex w-[48px] justify-center"><CloseIcon /></button>
        </div>
      </div>
      <RemoteToolbar id={id} />
      <div className="mx-[172px] flex min-h-0 flex-1 flex-col">
        <OutlookHeader />
        <Ribbon id={id} />
        <div className="flex min-h-0 flex-1">
          <FolderPane />
          <MailList id={id} />
          <ReadingPane />
        </div>
        <StatusBar id={id} />
        <RemoteTaskbar id={id} />
      </div>
    </div>
  );
}

function AppIcons() {
  return (
    <>
      <TaskIcon label="Explorer" w="w-[49px]"><Folder size={22} /></TaskIcon>
      <TaskIcon label="Edge" w="w-[49px]"><Edge size={24} /></TaskIcon>
      <TaskIcon label="Chrome" w="w-[49px]" on><Chrome size={22} /></TaskIcon>
      <TaskIcon label="Splashtop" w="w-[49px]" on><Splash size={22} /></TaskIcon>
      <TaskIcon label="Paint" w="w-[49px]" on><Palette size={24} /></TaskIcon>
    </>
  );
}

/* ---------- Paint ---------- */

const RibbonSection = ({ w, label, children }) => (
  <section className={cx("my-[3px] flex shrink-0 flex-col border-r border-[#dcdddf]", w)}>
    <div className="flex h-[71px] pt-[1px]">{children}</div>
    {label && <div className="text-center leading-[16px] text-[#5a5a5a]">{label}</div>}
  </section>
);
const PaintRow = ({ icon, children, caret, off }) => (
  <button disabled={off} className={cx("flex h-[22px] items-center gap-[3px] whitespace-nowrap", off && "text-[#9a9a9a]")}>
    <span className="flex w-4 justify-center">{icon}</span>{children}{caret && <Caret className={off ? "text-[#aaa]" : "text-[#222]"} />}
  </button>
);
const PaintBig = ({ w, icon, lines, caret, off, active }) => (
  <button disabled={off} className={cx("flex h-[67px] shrink-0 flex-col items-center", w, off && "text-[#9a9a9a]", active && "border border-[#7aa7d4] bg-[#c9e0f7]")}>
    <span className="flex h-[38px] items-center justify-center">{icon}</span>
    {lines.map((l) => <span key={l} className="h-[13px] leading-[13px] whitespace-nowrap">{l}</span>)}
    {caret && <span className="flex h-3 items-center"><Caret className={off ? "text-[#aaa]" : "text-[#222]"} /></span>}
  </button>
);

const shapePaths = [
  "M1 1l14 12", "M1 12C4 12 4 6 7 6s0 6 3 6 2-10 5-11", "M8 1a7 6 0 1 0 .1 0z", "M1 1h14v12H1z", "M4 1h8q3 0 3 3v6q0 3-3 3H4q-3 0-3-3V4q0-3 3-3z", "M1 13L5 1h9l-3 5h4v7z", "M8 1l7 12H1z",
  "M1 0v13h13z", "M8 0l6 7-6 7-6-7z", "M8 0l7 6-2.500 8h-9L1 6z", "M8 0l6 3.500v7L8 14l-6-3.500v-7z", "M1 4h7V0l7 7-7 7v-4H1z", "M15 4H8V0L1 7l7 7v-4h7z", "M4 14V7H0l8-7 8 7h-4v7z",
  "M4 0v7H0l8 7 8-7h-4V0z", "M8 0l2 5 5 2-5 2-2 5-2-5-5-2 5-2z", "M8 0l2 5h6l-5 3 2 6-5-4-5 4 2-6-5-3h6z", "M8 0l2 3.500h4.500L12.500 7l2 3.500H10L8 14l-2-3.500H1.500L3.500 7l-2-3.500H6z", "M4 1h8q3 0 3 3v3q0 3-3 3H7l-4 4v-4q-2 0-2-3V4q0-3 3-3z", "M8 1q7 0 7 5t-7 5l-4 3v-4Q1 9 1 6q0-5 7-5z", "M5 2q3-2 5 0 4-1 4 2 3 3 0 5 0 3-4 2-3 2-5 1l-2 2v-3Q0 9 2 6 1 2 5 2z",
];
const palette = [
  ["#000000", "#7f7f7f", "#880015", "#ed1c24", "#ff7f27", "#fff200", "#22b14c", "#00a2e8", "#3f48cc", "#a349a4"],
  ["#ffffff", "#c3c3c3", "#b97a57", "#ffaec9", "#ffc90e", "#efe4b0", "#b5e61d", "#99d9ea", "#7092be", "#c8bfe7"],
  Array(10).fill("#f5f6f7"),
];

function PaintRibbon() {
  return (
    <div className="flex h-[93px] shrink-0 border-y border-[#d8d9db] bg-[#f5f6f7] text-[11px] text-[#3c3c3c]">
      <RibbonSection w="w-[107px]" label="Clipboard">
        <PaintBig w="w-[50px] ml-[1px]" lines={["Paste"]} caret icon={<Svg w={25} h={31}><rect y="3" width="25" height="28" rx="2" fill="#b98a4c" /><path d="M3 7h19v21H3z" fill="#fff" /><path d="M5 11h15M5 14h15M5 17h15M5 20h15M5 23h15" stroke="#b7cfe8" /><path d="M6 3h4q0-3 2.500-3T15 3h4v4H6z" fill="#8b9097" /></Svg>} />
        <div className="flex flex-col">
          <PaintRow icon={<Svg w={11} h={15}><path d="M2 0l5 9M9 0L4 9" stroke="#7c8fa3" strokeWidth="1.400" /><circle cx="2.500" cy="12" r="2" stroke="#2c79bf" strokeWidth="1.400" /><circle cx="8" cy="12" r="2" stroke="#2c79bf" strokeWidth="1.400" /></Svg>}>Cut</PaintRow>
          <PaintRow icon={<Svg w={15} h={15}><path d="M.5.5h6l2 2v8h-8zM6.500 4.500h5l3 3v7h-8z" fill="#fff" stroke="#7c8fa3" /><path d="M8 8h4M8 10h5M8 12h5M2 4h4M2 6h3" stroke="#6f9fd0" /></Svg>}>Copy</PaintRow>
        </div>
      </RibbonSection>
      <RibbonSection w="w-[122px]" label="Image">
        <PaintBig active w="w-[43px] ml-1" lines={["Select"]} caret icon={<Svg w={30} h={26}><rect x=".5" y=".5" width="29" height="25" stroke="#2a5f93" strokeDasharray="2 2" /></Svg>} />
        <div className="flex flex-col pl-[3px]">
          <PaintRow icon={<Svg w={13} h={12}><path d="M3 0v9h10M0 3h10v9M4 8l6-5" stroke="#2a6a9e" strokeWidth="1.300" /></Svg>}>Crop</PaintRow>
          <PaintRow icon={<Svg w={13} h={12}><path d="M4.500.5h8v7h-8zM.5 6.500h6v5h-6z" fill="#fff" stroke="#2a6a9e" strokeWidth="1.300" /></Svg>}>Resize</PaintRow>
          <PaintRow caret icon={<Svg w={14} h={12}><path d="M0 12L6 4v8z" fill="#b8bec6" /><path d="M8 2l5 10H8z" fill="#1e7fb8" /><path d="M3 3q3-3 5-1" stroke="#2c79bf" /></Svg>}>Rotate</PaintRow>
        </div>
      </RibbonSection>
      <RibbonSection w="w-[80px]" label="Tools">
        <div className="grid w-full grid-cols-3 content-start justify-items-center gap-y-[6px] px-1 pt-[7px]">
          <button aria-label="Pencil" className="flex h-[22px] items-center"><Svg w={16} h={15}><path d="M1 14l2-4 9-9 3 2.500-10 9z" fill="#f3c64d" stroke="#9d7431" strokeWidth=".6" /><path d="M12 1l3 2.500-2 2-3-3z" fill="#d98080" /><path d="M1 14l1-2 1 1z" fill="#222" /></Svg></button>
          <button aria-label="Fill with color" className="flex h-[22px] items-center"><Svg w={18} h={16}><path d="M1 15V6q1-3 4-3l3 3q-3 1-4 9z" fill="#e65c2d" /><path d="M9 1l8 7-6 7-6-6z" fill="#cfe1f1" stroke="#6f8ca8" /></Svg></button>
          <button aria-label="Text" className="flex h-[22px] items-center font-['Liberation_Serif',serif] text-[20px] leading-none font-bold text-[#263f5e]">A</button>
          <button aria-label="Eraser" className="flex h-[22px] items-center"><Svg w={16} h={14}><path d="M1 9l8-8h6l-1 5-7 7H1z" fill="#ee9691" stroke="#b86561" strokeWidth=".7" /><path d="M1 9h6l7-7" stroke="#fbd3d0" /></Svg></button>
          <button aria-label="Color picker" className="flex h-[22px] items-center"><Svg w={15} h={15}><path d="M1 14l1-3 6-6 2 2-6 6z" fill="#bcd6ec" stroke="#5c83a8" strokeWidth=".8" /><path d="M7 4l4 4M9 5l4-4 2 2-4 3z" fill="#1e4f80" stroke="#1e4f80" strokeWidth="1.500" /></Svg></button>
          <button aria-label="Magnifier" className="flex h-[22px] items-center"><Svg w={15} h={16}><circle cx="6" cy="6" r="5" fill="#dbeaf5" stroke="#8a98a8" strokeWidth="1.400" /><path d="M10 10l4 5" stroke="#b47a3e" strokeWidth="2.600" /></Svg></button>
        </div>
      </RibbonSection>
      <RibbonSection w="w-[56px]">
        <PaintBig w="w-[54px]" lines={["Brushes"]} caret icon={<Svg w={32} h={32}><path d="M.5.5h31v31H.5z" fill="#fdfdfd" stroke="#999" /><path d="M14 5Q1 14 3 24q4 7 12 5-8-2-8-9 0-6 8-12z" fill="#e2532a" /><path d="M31 5L20 17l3 3L31 11z" fill="#7f93a8" /><path d="M20 17q-8 3-5 13 8-1 8-10z" fill="#9b6a3a" /></Svg>} />
      </RibbonSection>
      <RibbonSection w="w-[246px]" label="Shapes">
        <div className="mt-[3px] ml-[5px] flex h-[60px] w-[157px] border border-[#d5d8dc] bg-[#f9fbfd]">
          <div className="grid flex-1 grid-cols-7 place-items-center">
            {shapePaths.map((d, i) => <button key={i} aria-label={`Shape ${i + 1}`}><Svg w={16} h={14}><path d={d} fill={i < 2 ? "none" : "#eef6fc"} stroke="#3b7aae" strokeWidth="1.100" /></Svg></button>)}
          </div>
          <div className="flex w-[14px] flex-col items-center justify-around border-l border-[#d5d8dc]">
            <button aria-label="Previous row"><CaretUp className="text-[#aaa]" /></button>
            <button aria-label="Next row"><Caret className="text-[#444]" /></button>
            <button aria-label="More shapes"><Svg w={6} h={6}><path d="M0 0h6v1H0zM0 3h6L3 6z" fill="#444" /></Svg></button>
          </div>
        </div>
        <div className="flex flex-col pl-[6px]">
          <PaintRow off caret icon={<Svg w={15} h={14}><path d="M.5 1.500h11v12H.5z" stroke="#b3bcc9" /><path d="M4 11L13 0l2 2-9 10z" fill="#c9d0da" stroke="#9aa6b6" strokeWidth=".7" /></Svg>}>Outline</PaintRow>
          <PaintRow off caret icon={<Svg w={15} h={15}><path d="M8 0l6 6-5 6-6-6z" fill="#dde4ec" stroke="#9aa6b6" /><path d="M0 12h15v3H0z" fill="#a9b7cb" /><path d="M3 5Q0 8 1 12h3z" fill="#a9b7cb" /></Svg>}>Fill</PaintRow>
        </div>
      </RibbonSection>
      <RibbonSection w="w-[53px]">
        <PaintBig off w="w-[52px]" lines={["Size"]} caret icon={<Svg w={32} h={28}><path d="M0 .5h32" stroke="#7b8cab" /><path d="M0 6.500h32" stroke="#7b8cab" strokeWidth="2" /><path d="M0 14h32" stroke="#7b8cab" strokeWidth="4" /><path d="M0 23.500h32" stroke="#7b8cab" strokeWidth="7" /></Svg>} />
      </RibbonSection>
      <RibbonSection w="w-[357px]" label="Colors">
        <PaintBig active w="w-[42px] ml-1" lines={["Color", "1"]} icon={<span className="h-8 w-8 border-2 border-[#7f8c9b] bg-black ring-1 ring-white ring-inset" />} />
        <PaintBig w="w-[41px]" lines={["Color", "2"]} icon={<span className="h-6 w-6 border border-[#7f7f7f] bg-white" />} />
        <div className="grid shrink-0 grid-cols-10 content-start gap-[2px] pt-[1px] pl-[2px]">
          {palette.flat().map((c, i) => (
            <button key={i} aria-label={`Color ${c}`} className="h-[20px] w-[20px] border border-[#a0a0a0] bg-[#f8f9fa] p-px">
              <span style={{ backgroundColor: c }} className="block h-full w-full" />
            </button>
          ))}
        </div>
        <PaintBig w="w-[44px]" lines={["Edit", "colors"]} icon={<span className="h-7 w-7 border-2 border-[#ddd] bg-[linear-gradient(180deg,transparent_30%,#808080),linear-gradient(90deg,#f33,#fe2,#3e3,#3df,#33f,#f3e)] outline outline-[#999]" />} />
      </RibbonSection>
      <RibbonSection w="w-[62px]">
        <PaintBig w="w-[60px]" lines={["Edit with", "Paint 3D"]} icon={<Svg w={29} h={30}><defs><linearGradient id="drop" x1="0" y1="0" x2=".3" y2="1"><stop stopColor="#35c7ee" /><stop offset=".5" stopColor="#8f6be0" /><stop offset="1" stopColor="#e8452f" /></linearGradient></defs><path d="M.5.5h28v29H.5z" fill="#fff" stroke="#b5b5b5" /><path d="M14.500 3q8 1 8 8 0 6-7 15-1 1-2-1l1-6q-8-1-8-8t8-8z" fill="url(#drop)" /></Svg>} />
      </RibbonSection>
    </div>
  );
}

function PaintWindow() {
  return (
    <div className="flex min-h-0 flex-1 flex-col bg-white">
      <div className="flex h-[23px] shrink-0 items-center text-[11px] text-[#999]">
        <Palette size={16} />
        <span className="mx-[7px] h-3 w-px bg-[#888]" />
        <button aria-label="Save" className="mr-2 ml-[3px]"><Svg w={14} h={14}><path d="M0 0h14v14H0z" fill="#8660a8" /><path d="M3 0h8v6H3z" fill="#fff" /><path d="M3 9h8v5H3z" fill="#d9cfe3" /></Svg></button>
        <button aria-label="Undo" className="mr-2"><Svg w={14} h={13}><path d="M6 0L0 4l5 5V6q4 0 3 7 6-4 6-8T6 2z" fill="#3289d6" /></Svg></button>
        <button aria-label="Redo" className="mr-2"><Svg w={14} h={13}><path d="M8 0l6 4-5 5V6q-4 0-3 7-6-4-6-8t8-3z" fill="#b6c4d3" /></Svg></button>
        <button aria-label="Customize" className="mr-[9px]"><Svg w={7} h={7}><path d="M0 0h7v1.500H0zM0 3.500h7L3.500 7z" fill="#333" /></Svg></button>
        <span className="mr-[7px] h-3 w-px bg-[#888]" />
        sairyu1 - Paint
        <div className="ml-auto flex text-[#888]">
          <button aria-label="Minimize" className="flex w-[46px] justify-center"><MinIcon /></button>
          <button aria-label="Restore" className="flex w-[46px] justify-center"><RestoreIcon /></button>
          <button aria-label="Close" className="flex w-[44px] justify-center"><CloseIcon /></button>
        </div>
      </div>
      <nav className="flex h-[23px] shrink-0 items-stretch text-[11px] text-[#333]">
        <button className="w-14 bg-[#1979ca] font-bold text-white">File</button>
        <button className="relative -mb-px w-[58px] border-x border-t border-[#d8d9db] bg-[#f5f6f7]">Home</button>
        <button className="w-[56px]">View</button>
        <span className="ml-auto flex items-center gap-[7px] pr-[7px]">
          <Chevron />
          <button aria-label="Help" className="flex h-[14px] w-[14px] items-center justify-center rounded-full bg-[#2a7fd0] text-[10px] leading-none font-bold text-white">?</button>
        </span>
      </nav>
      <PaintRibbon />
      <div className="flex min-h-0 flex-1 bg-[#c9d4e7]">
        <div className="relative ml-[5px] flex min-w-0 flex-1 flex-col overflow-hidden">
          <div className="flex h-[5px] shrink-0 overflow-hidden bg-[#ebebeb] text-[10px] leading-[9px] whitespace-pre text-[#6a6a6a]">
            <span className="w-[172px] bg-black" />
            <span className="w-[163px] border-r border-[#cfcfcf] bg-[#e3e3e3]" />
            <span className="w-[257px] border-r border-[#c6c6c6] pl-[29px]">MyAnalytics  自分の習慣を</span>
          </div>
          <div className="relative flex h-[1040px] w-[1920px] shrink-0 flex-col">
            <RemoteSession id="pasted" />
            <div className="pointer-events-none absolute inset-0 border-t border-l border-dashed border-[#2f7fb5]" />
            <div className="absolute top-[-2px] left-0 h-[5px] w-[5px] border border-[#444] bg-white" />
          </div>
        </div>
        <div className="flex w-[17px] shrink-0 flex-col bg-[#f0f0f0]">
          <button aria-label="Scroll up" className="flex h-[17px] items-center justify-center"><Chevron /></button>
          <div className="h-[234px] shrink-0" />
          <div className="min-h-0 flex-1 bg-[#cdcdcd]" />
          <button aria-label="Scroll down" className="flex h-[11px] rotate-180 items-center justify-center"><Chevron /></button>
        </div>
      </div>
      <div className="flex h-[7px] shrink-0 border-b border-white bg-[linear-gradient(#a9b5cb,#d5dfee)]" />
      <div className="flex h-[17px] shrink-0 items-center border-b border-[#d5d5d5] bg-[#f0f0f0]">
        <button aria-label="Scroll left" className="flex w-[17px] -rotate-90 justify-center"><Chevron /></button>
        <div className="h-full w-[48%] bg-[#cdcdcd]" />
        <button aria-label="Scroll right" className="mr-[22px] ml-auto flex rotate-90 justify-center"><Chevron /></button>
      </div>
      <footer className="flex h-[25px] shrink-0 items-center bg-[#f0f0f0] text-[11px] text-[#222]">
        <span className="flex h-full w-[155px] items-center border-r border-[#dadada] pl-1"><Svg w={11} h={11}><path d="M5.500 0v11M0 5.500h11M4 1.500L5.500 0 7 1.500M4 9.500L5.500 11 7 9.500M1.500 4L0 5.500 1.500 7M9.500 4L11 5.500 9.500 7" stroke="#2b4d77" /></Svg></span>
        <span className="flex h-full w-[156px] items-center border-r border-[#dadada] pl-[6px]"><Svg w={14} h={12}><path d="M3.500 2.500h9v7h-9z" stroke="#2b4d77" strokeDasharray="2 1" /><path d="M.5 0v9M3 11.500h10" stroke="#2b4d77" /></Svg></span>
        <span className="flex h-full w-[156px] items-center gap-[6px] border-r border-[#dadada] pl-[6px]"><Svg w={13} h={12}><path d="M3.500.5h9v8h-9zM.5 0v10M3 11.500h10" stroke="#2b4d77" /></Svg>3840 × 1172px</span>
        <span className="flex items-center gap-[7px] pl-[8px]"><Svg w={11} h={12}><path d="M.5.5h10v11H.5zM3 .5v4h5v-4M3 11.500v-4h5v4" stroke="#2b4d77" /></Svg>Size: 630.7KB</span>
        <div className="ml-auto flex h-full items-center border-l border-[#dadada] pr-[5px] pl-[22px]">
          <span>100%</span>
          <button aria-label="Zoom out" className="ml-[6px]"><Svg w={15} h={15}><circle cx="7.500" cy="7.500" r="6.800" fill="#fafafa" stroke="#888" /><path d="M4.500 7.500h6" stroke="#444" strokeWidth="1.400" /></Svg></button>
          <input aria-label="Zoom" type="range" defaultValue="50" className="mx-[11px] h-4 w-[86px] appearance-none bg-[linear-gradient(#d6d6d6,#d6d6d6)] bg-[length:100%_3px] bg-center bg-no-repeat [&::-webkit-slider-thumb]:h-4 [&::-webkit-slider-thumb]:w-[11px] [&::-webkit-slider-thumb]:appearance-none [&::-webkit-slider-thumb]:bg-[#0078d7]" />
          <button aria-label="Zoom in"><Svg w={15} h={15}><circle cx="7.500" cy="7.500" r="6.800" fill="#fafafa" stroke="#888" /><path d="M4.500 7.500h6M7.500 4.500v6" stroke="#444" strokeWidth="1.400" /></Svg></button>
        </div>
      </footer>
    </div>
  );
}

const Clock = ({ className }) => (
  <time className={cx("flex flex-col text-center text-[11px] leading-[19px] text-white", className)}><span>4:54 PM</span><span>2/10/2021</span></time>
);

export default function App() {
  return (
    <div className="flex h-screen w-full overflow-hidden bg-black font-['Noto_Sans','Noto_Sans_CJK_JP',sans-serif] [font-feature-settings:'palt'] leading-normal">
      <main className="flex min-w-0 flex-1 flex-col pb-[92px]">
        <RemoteSession id="live" />
        <div className="flex h-10 shrink-0 items-center bg-[#1d1d1d]">
          <TaskIcon label="Start" w="w-[48px]"><WinLogo /></TaskIcon>
          <TaskIcon label="Search" w="w-[48px]"><Glass /></TaskIcon>
          <TaskIcon label="Task view" w="w-[50px]"><TaskView /></TaskIcon>
          <AppIcons />
          <Clock className="mr-[6px] ml-auto" />
        </div>
      </main>
      <main className="flex min-w-0 flex-1 flex-col pt-[92px]">
        <PaintWindow />
        <div className="flex h-10 shrink-0 items-center bg-[#1d1d1d] text-white">
          <TaskIcon label="Start" w="w-[48px]"><WinLogo /></TaskIcon>
          <label htmlFor="task-search" className="flex h-full w-[344px] items-center gap-3 bg-[#f2f2f2] pl-3">
            <Glass className="text-[#333]" />
            <input id="task-search" aria-label="Search" placeholder="Type here to search" className="min-w-0 flex-1 bg-transparent text-[14px] text-[#333] outline-none placeholder:text-[#444]" />
          </label>
          <TaskIcon label="Task view" w="w-[50px]"><TaskView /></TaskIcon>
          <AppIcons />
          <div className="ml-auto flex h-full items-center">
            <button aria-label="Hidden icons"><Svg w={11} h={7}><path d="M.5 6l5-5 5 5" stroke="#fff" strokeWidth="1.200" /></Svg></button>
            <Svg w={12} h={16} className="ml-3"><path d="M3 3h6v4H3zM3 7h6l-1 5H4zM1 2v2M11 2v2M2 14q4 3 8 0M2 1q4-2 8 0" stroke="#fff" /></Svg>
            <span className="w-[46px] text-center text-[11px]">ENG</span>
            <Clock />
            <button aria-label="Notifications" className="relative mr-[19px] ml-5">
              <Svg w={16} h={16}><path d="M0 0h16v12H6l-3 4v-4H0z" fill="#fff" /><path d="M3 3.500h10M3 6h10M3 8.500h6" stroke="#222" /></Svg>
              <span className="absolute top-[7px] left-[8px] flex h-[14px] w-[14px] items-center justify-center rounded-full border border-[#aaa] bg-[#1d1d1d] text-[9px] leading-none">9</span>
            </button>
            <span className="mr-1 h-full w-px bg-[#555]" />
          </div>
        </div>
      </main>
    </div>
  );
}
